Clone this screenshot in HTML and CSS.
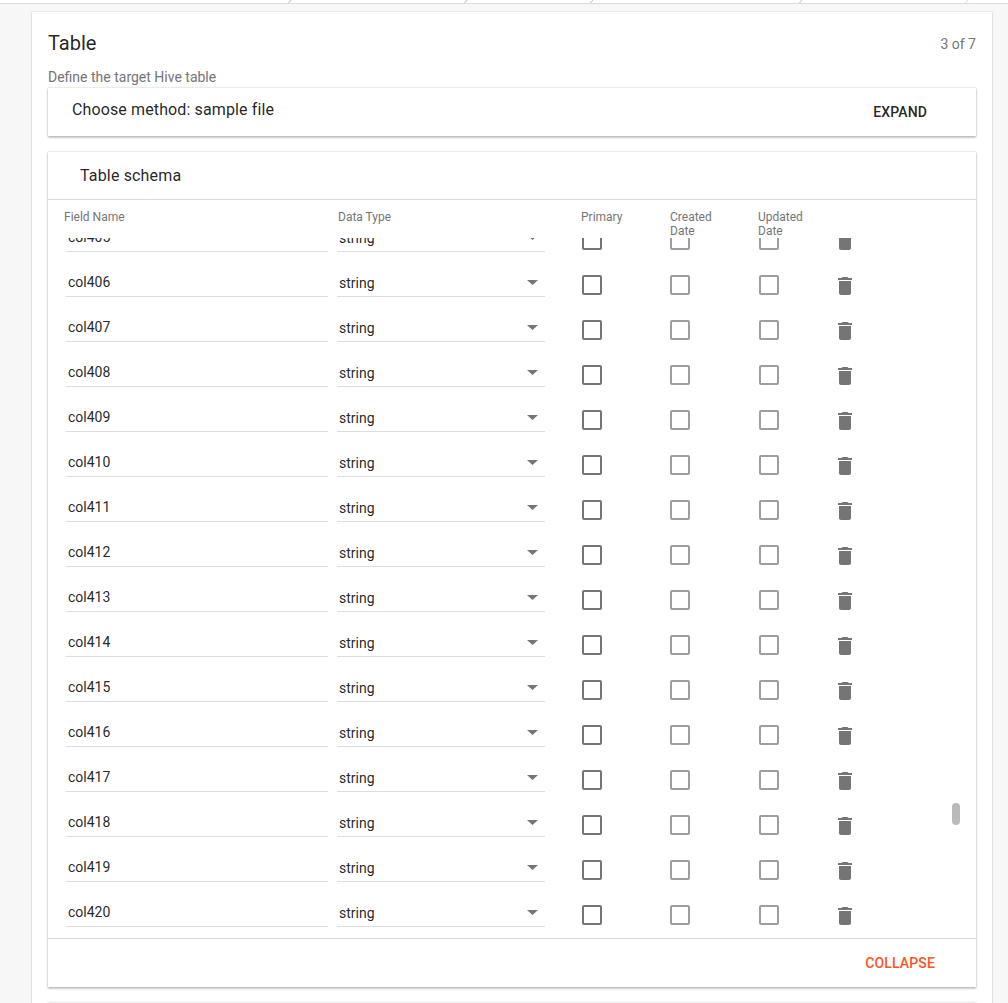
FILE: index.html
```html
<!DOCTYPE html>
<html lang="en">
<head>
<meta charset="utf-8">
<title>Table</title>
<link rel="stylesheet" href="styles.css">
</head>
<body>
<div class="stepper">
  <svg width="1008" height="3" fill="none" stroke="#bdbdbd"><path d="M291 0l-2.600 3M467 0l-2.600 3M593 0l-2.600 3M802 0l-2.600 3"/><path stroke="#dcdcdc" d="M968 0l-2.600 3"/></svg>
</div>
<main class="page-card">
  <header class="page-head">
    <h1>Table</h1>
    <span class="step-count">3 of 7</span>
  </header>
  <p class="hint">Define the target Hive table</p>
  <section class="card method">
    <h2>Choose method: sample file</h2>
    <button class="btn">Expand</button>
  </section>
  <section class="card schema">
    <h2 class="schema-title">Table schema</h2>
    <div class="columns labels">
      <span>Field Name</span>
      <span>Data Type</span>
      <span>Primary</span>
      <span>Created<br>Date</span>
      <span>Updated<br>Date</span>
    </div>
    <div class="viewport">
      <div class="rows" id="rows"></div>
      <div class="thumb"></div>
    </div>
    <footer class="schema-foot"><button class="btn accent">Collapse</button></footer>
  </section>
  <section class="card next"></section>
</main>
<template id="row">
  <div class="columns row">
    <div class="field"></div>
    <div class="select"><span>string</span><i class="caret"></i></div>
    <i class="check"></i>
    <i class="check dim"></i>
    <i class="check dim"></i>
    <svg class="trash" viewBox="0 0 24 24"><path d="M6 19c0 1.100.9 2 2 2h8c1.100 0 2-.9 2-2V7H6v12zM19 4h-3.500l-1-1h-5l-1 1H5v2h14V4z"/></svg>
  </div>
</template>
<script src="rows.js"></script>
</body>
</html>
```
FILE: rows.js
```js
const rows = document.getElementById('rows');
const template = document.getElementById('row');
for (let n = 405; n <= 420; n++) {
  const row = template.content.cloneNode(true);
  row.querySelector('.field').textContent = 'col' + n;
  rows.append(row);
}
```
FILE: styles.css
```css
* { box-sizing: border-box; }
body {
  margin: 0;
  height: 1003px;
  overflow: hidden;
  background: #f7f7f7;
  color: rgba(0, 0, 0, .87);
  font-family: Roboto, sans-serif;
}
h1, h2, p { margin: 0; font-weight: 400; }
.stepper { height: 4px; background: #fff; border-bottom: 1px solid #dcdcdc; }
.stepper svg { display: block; }
.page-card {
  margin: 8px 16px 0 32px;
  height: 991px;
  padding: 16px 16px 0;
  background: #fff;
  box-shadow: 0 1px 2px rgba(0, 0, 0, .2), 0 0 1px rgba(0, 0, 0, .2);
}
.page-head { display: flex; justify-content: space-between; height: 32px; line-height: 31px; }
h1 { font-size: 20px; }
.step-count { font-size: 14px; line-height: 32px; color: #757575; }
.hint { height: 28px; padding-top: 9px; font-size: 14px; line-height: 16px; color: #757575; }
.card { background: #fff; box-shadow: 0 2px 2px rgba(0, 0, 0, .2), 0 0 2px rgba(0, 0, 0, .25); }
.method { display: flex; justify-content: space-between; height: 48px; padding: 0 49px 0 24px; }
h2 { font-size: 16px; letter-spacing: .12px; line-height: 44px; }
.btn { border: 0; padding: 0; background: none; font: 500 14px/49px Roboto, sans-serif; letter-spacing: .14px; text-transform: uppercase; color: inherit; }
.schema { margin-top: 16px; height: 835px; }
.schema-title { height: 48px; line-height: 47px; padding-left: 32px; letter-spacing: .16px; border-bottom: 1px solid #d9d9d9; }
.columns { display: grid; grid-template-columns: 274px 243px 89px 88px 80px 1fr; }
.labels { height: 38px; padding: 10px 0 0 16px; font-size: 12px; line-height: 14px; color: #757575; }
.viewport { position: relative; height: 700px; overflow: hidden; }
.rows { margin-top: -31px; }
.row { height: 45px; padding-left: 18px; grid-template-columns: 271px 245px 88px 89px 74px 24px; font-size: 14px; }
.field, .select { border-bottom: 1px solid #dedede; height: 45px; line-height: 16px; }
.field { width: 262px; padding: 22px 0 0 2px; }
.select { display: flex; justify-content: space-between; width: 208px; padding: 23px 7px 0 2px; }
.caret { width: 11px; height: 5px; margin-top: 5px; background: #757575; clip-path: polygon(0 0, 100% 0, 50% 100%); }
.check { width: 20px; height: 20px; margin-top: 23px; border: 2px solid #757575; border-radius: 2px; }
.check.dim { border-color: #9e9e9e; }
.trash { width: 24px; height: 24px; margin-top: 22px; fill: #757575; }
.thumb { position: absolute; left: 904px; top: 565px; width: 8px; height: 22px; border-radius: 4px; background: #bababa; }
.schema-foot { height: 49px; padding-right: 41px; text-align: right; border-top: 1px solid #d9d9d9; }
.accent { color: #ff5226; }
.next { margin-top: 16px; height: 48px; }
```
